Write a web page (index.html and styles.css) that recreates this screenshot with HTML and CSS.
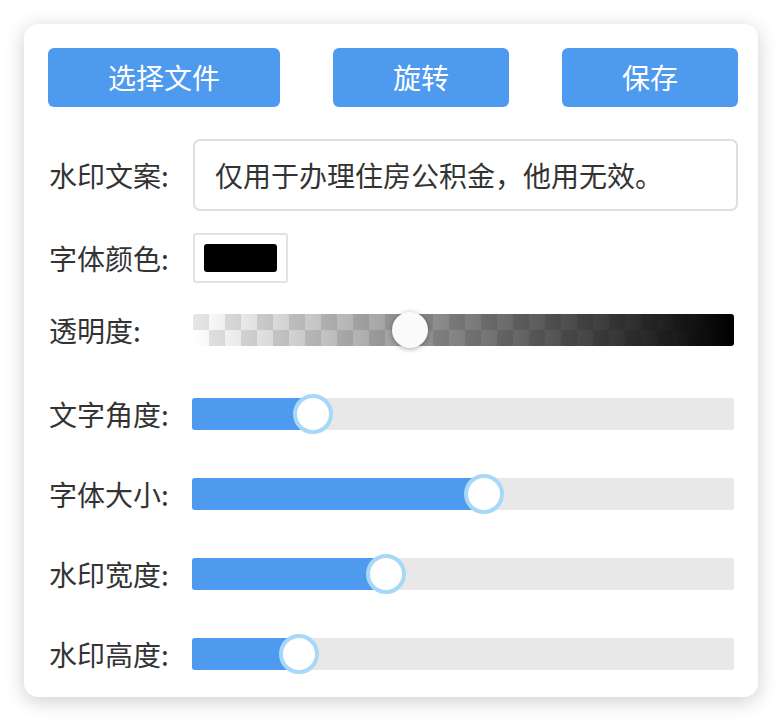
FILE: index.html
```html
<!DOCTYPE html>
<html lang="zh-CN">
<head>
<meta charset="utf-8">
<title>水印</title>
<link rel="stylesheet" href="styles.css">
</head>
<body>
<div class="card">
  <div class="btns">
    <button class="btn btn-wide">选择文件</button>
    <button class="btn">旋转</button>
    <button class="btn">保存</button>
  </div>
  <div class="row row-text">
    <span class="label">水印文案:</span>
    <div class="textbox">仅用于办理住房公积金，他用无效。</div>
  </div>
  <div class="row row-color">
    <span class="label">字体颜色:</span>
    <div class="colorbox"><span class="swatch"></span></div>
  </div>
  <div class="row row-alpha">
    <span class="label">透明度:</span>
    <div class="alpha">
      <span class="alpha-thumb" style="left: 40.1%"></span>
    </div>
  </div>
  <div class="row row-slider row-first">
    <span class="label">文字角度:</span>
    <div class="slider"><span class="fill" style="width: 22.4%"></span><span class="thumb" style="left: 22.4%"></span></div>
  </div>
  <div class="row row-slider">
    <span class="label">字体大小:</span>
    <div class="slider"><span class="fill" style="width: 53.9%"></span><span class="thumb" style="left: 53.9%"></span></div>
  </div>
  <div class="row row-slider">
    <span class="label">水印宽度:</span>
    <div class="slider"><span class="fill" style="width: 35.8%"></span><span class="thumb" style="left: 35.8%"></span></div>
  </div>
  <div class="row row-slider">
    <span class="label">水印高度:</span>
    <div class="slider"><span class="fill" style="width: 19.7%"></span><span class="thumb" style="left: 19.7%"></span></div>
  </div>
</div>
</body>
</html>
```
FILE: styles.css
```css
* { box-sizing: border-box; }
html, body { margin: 0; padding: 0; background: #fff; }
body {
  padding: 24px;
  font-family: "Noto Sans CJK SC", "Noto Sans", sans-serif;
  color: #333;
}
.card {
  width: 734px;
  height: 673px;
  background: #fff;
  border-radius: 14px;
  box-shadow: 0 4px 20px rgba(0,0,0,0.2);
  padding: 24px 20px 23px 24px;
  display: flex;
  flex-direction: column;
}
.btns {
  display: flex;
  justify-content: space-between;
  height: 59px;
  flex: none;
}
.btn {
  border: none;
  border-radius: 6px;
  background: #4e9aee;
  color: #fff;
  font-family: inherit;
  font-size: 28px;
  width: 176px;
  height: 59px;
  padding: 0;
  line-height: 59px;
}
.btn-wide { width: 232px; }
.row {
  display: flex;
  align-items: center;
  flex: none;
}
.label {
  width: 145px;
  flex: none;
  font-size: 28px;
  line-height: 1;
  padding-left: 1px;
  white-space: nowrap;
}
.row-text { margin-top: 32px; height: 72px; }
.textbox {
  flex: 1;
  height: 72px;
  border: 2px solid #dedede;
  border-radius: 7px;
  font-size: 28px;
  line-height: 68px;
  padding-left: 20px;
  color: #333;
  white-space: nowrap;
}
.row-color { margin-top: 22px; height: 50px; }
.colorbox {
  width: 95px;
  height: 50px;
  border: 2px solid #e2e2e2;
  border-radius: 3px;
  padding: 9px;
}
.swatch {
  display: block;
  width: 100%;
  height: 100%;
  background: #000;
  border-radius: 3px;
}
.row-alpha { margin-top: 27px; height: 40px; }
.alpha {
  position: relative;
  flex: 1;
  margin-right: 4px;
  height: 32px;
  border-radius: 3px;
  background:
    linear-gradient(to right, rgba(0,0,0,0), #000),
    conic-gradient(#fff 25%, #e6e6e6 0 50%, #fff 0 75%, #e6e6e6 0) 0 0 / 32px 32px;
}
.alpha-thumb {
  position: absolute;
  top: 50%;
  width: 36px;
  height: 36px;
  margin: -18px 0 0 -18px;
  border-radius: 50%;
  background: #fafafa;
  box-shadow: 0 1px 5px rgba(0,0,0,0.35);
}
.row-slider { margin-top: 40px; height: 40px; }
.row-first { margin-top: 44px; }
.slider {
  position: relative;
  flex: 1;
  margin-left: -1px;
  margin-right: 4px;
  height: 32px;
  border-radius: 3px;
  background: #e8e8e8;
}
.fill {
  position: absolute;
  left: 0; top: 0; bottom: 0;
  background: #4e9aee;
  border-radius: 3px 0 0 3px;
}
.thumb {
  position: absolute;
  top: 50%;
  width: 40px;
  height: 40px;
  margin: -20px 0 0 -20px;
  border-radius: 50%;
  background: #fff;
  border: 4px solid #a8d8f8;
}
```
